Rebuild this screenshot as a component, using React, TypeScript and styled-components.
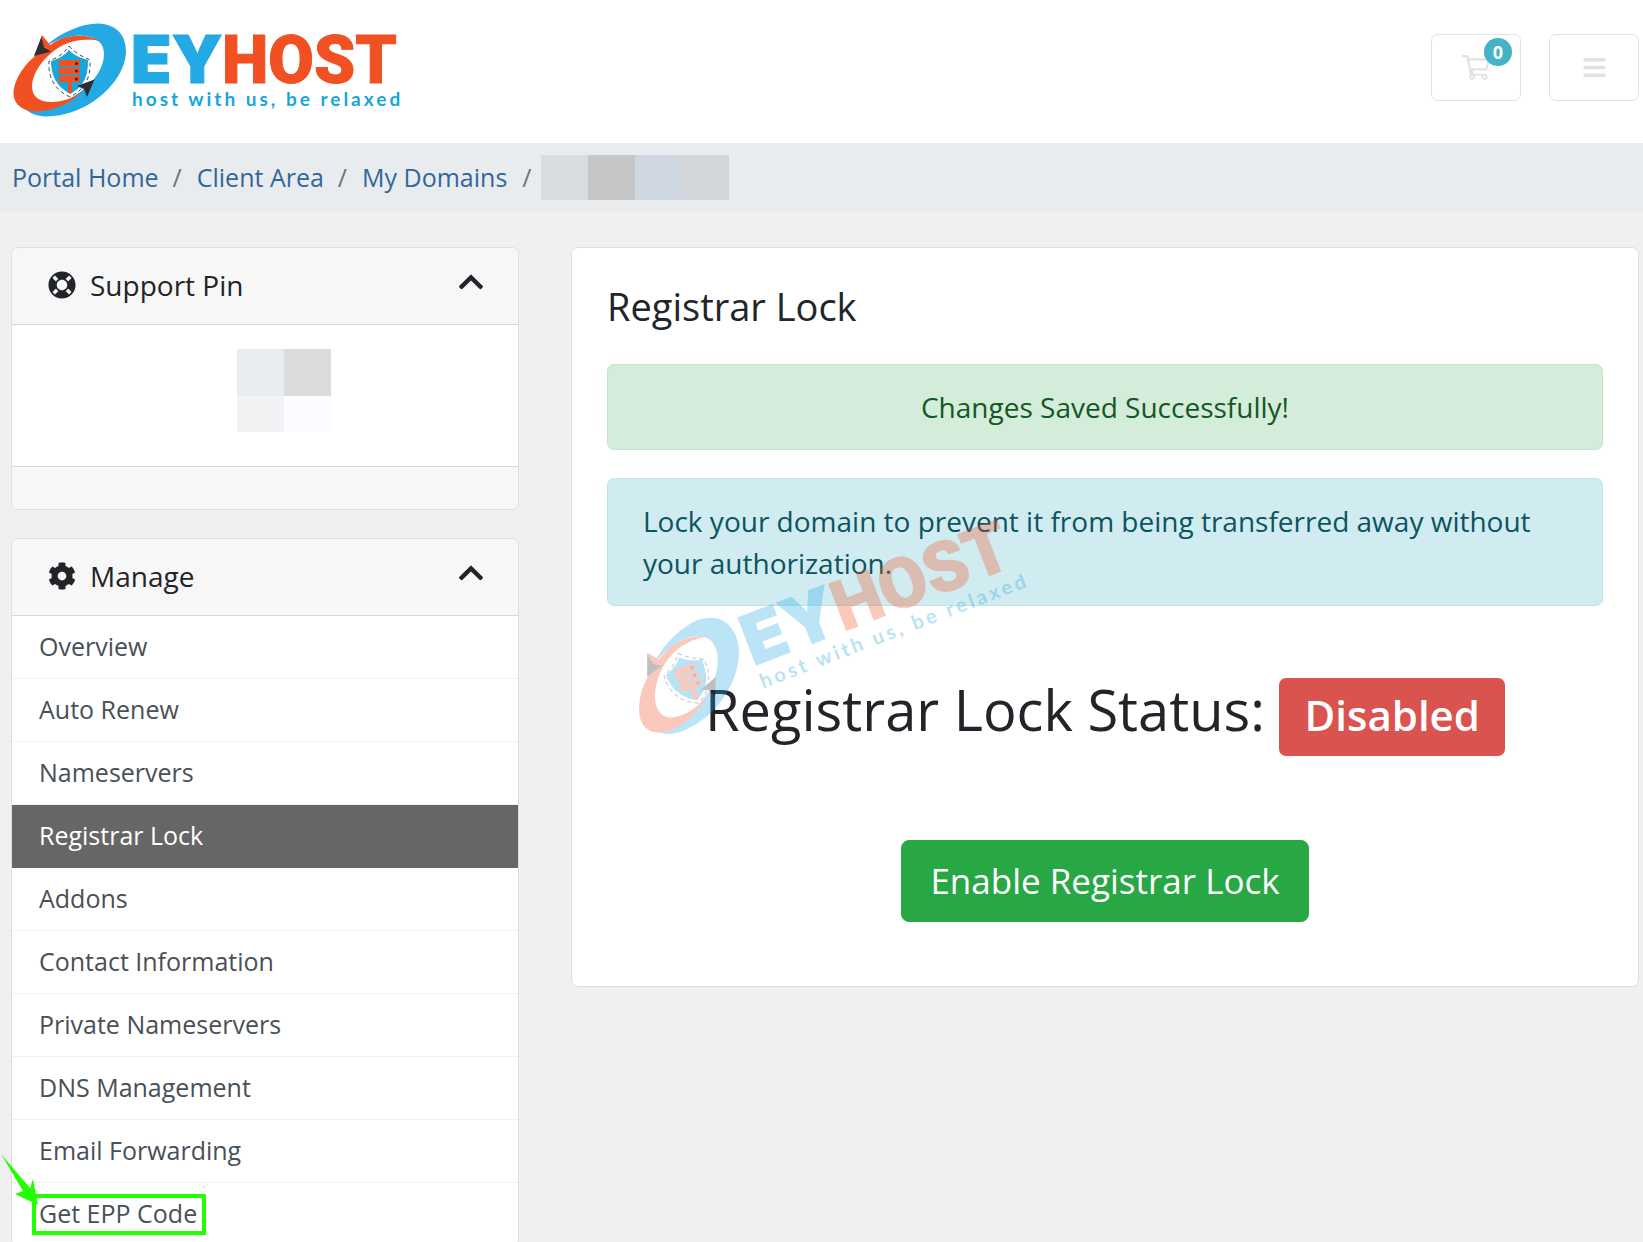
import React from "react";
import styled, { createGlobalStyle, css } from "styled-components";
import { FaBars, FaChevronUp, FaCog, FaLifeRing } from "react-icons/fa";

const GlobalStyle = createGlobalStyle`
  *, *::before, *::after { box-sizing: border-box; }
  body {
    margin: 0;
    background: #f0f0f0;
    color: #212529;
    font-family: "Open Sans", "Noto Sans", sans-serif;
    font-size: 28px;
    line-height: 42px;
  }
  a { text-decoration: none; }
`;

const Page = styled.div`
  height: 100vh;
  overflow: hidden;
`;

const Header = styled.header`
  display: flex;
  align-items: center;
  justify-content: space-between;
  padding: 12px 4px 11px 0;
  background: #fff;
`;

const LogoSvg = styled.svg`
  display: block;
  width: 420px;
  height: 120px;
`;

const HeaderTools = styled.div`
  display: flex;
  gap: 28px;
  margin-bottom: 10px;
`;

const ToolButton = styled.button`
  position: relative;
  display: flex;
  align-items: center;
  justify-content: center;
  width: 90px;
  height: 67px;
  padding: 0;
  border: 1px solid #e2e2e2;
  border-radius: 7px;
  background: #fff;
  color: #e2e2e2;
`;

const CountBadge = styled.span`
  position: absolute;
  top: 3px;
  right: 8px;
  width: 28px;
  height: 28px;
  border-radius: 50%;
  background: #45b3c6;
  color: #fff;
  font: 700 18px/28px "Open Sans", sans-serif;
  text-align: center;
`;

const Breadcrumb = styled.nav`
  background: #e9ecef;

  ol {
    display: flex;
    align-items: center;
    height: 69px;
    margin: 0;
    padding: 0 12px 1px;
    list-style: none;
    font-size: 25px;
  }
  li {
    display: flex;
    align-items: center;
  }
  li + li::before {
    content: "/";
    padding: 0 15px 0 14px;
    color: #6c757d;
  }
  li:last-child::before {
    padding-left: 15px;
    padding-right: 10px;
  }
  a {
    color: #336699;
  }
`;

const Mosaic = styled.span<{ $columns: number; $rows: string }>`
  display: grid;
  grid-template-columns: repeat(${(p) => p.$columns}, 47px);
  grid-template-rows: ${(p) => p.$rows};
`;

const Tile = styled.span<{ $color: string }>`
  background: ${(p) => p.$color};
`;

const Layout = styled.div`
  display: grid;
  grid-template-columns: minmax(0, 508fr) minmax(0, 1068fr);
  align-items: start;
  column-gap: 52px;
  padding: 35px 4px 0 11px;
`;

const Sidebar = styled.aside`
  display: grid;
  gap: 28px;
`;

const Card = styled.section`
  border: 1px solid #dfdfdf;
  border-radius: 7px;
  background: #fff;
`;

const CardHeader = styled.h3`
  display: flex;
  align-items: center;
  gap: 14px;
  height: 77px;
  margin: 0;
  padding: 0 33px 2px 36px;
  border-bottom: 1px solid #d8d8d8;
  border-radius: 6px 6px 0 0;
  background: #f7f7f7;
  font-size: 28px;
  font-weight: 400;
`;

const Collapse = styled.button`
  display: flex;
  margin-left: auto;
  margin-bottom: 6px;
  padding: 0;
  border: 0;
  background: none;
  color: inherit;
`;

const PinBody = styled.div`
  display: flex;
  justify-content: center;
  padding: 24px 35px 34px 72px;
`;

const CardFooter = styled.div`
  height: 43px;
  border-top: 1px solid #d8d8d8;
  border-radius: 0 0 6px 6px;
  background: #f7f7f7;
`;

const MenuLink = styled.a<{ $active?: boolean }>`
  display: block;
  height: 63px;
  padding: 9px 27px;
  border-bottom: 1px solid #f2f2f2;
  color: #495057;
  font-size: 25px;
  ${(p) =>
    p.$active &&
    css`
      border-color: #666;
      background: #666;
      color: #fff;
    `}
`;

const Marked = styled.span`
  position: relative;

  &::after {
    content: "";
    position: absolute;
    inset: -2px -9px -5px -7px;
    border: 4px solid #22ff00;
    border-radius: 1px;
  }
`;

const Arrow = styled.svg`
  position: absolute;
  left: -40px;
  top: -44px;
  width: 40px;
  height: 54px;
`;

const Panel = styled(Card)`
  position: relative;
  padding: 35px 35px 64px;
`;

const Title = styled.h3`
  margin: 0 0 35px;
  font-size: 38px;
  font-weight: 400;
  line-height: 46px;
`;

const Alert = styled.div<{ $kind: "success" | "info" }>`
  margin-bottom: 28px;
  padding: 21px 35px;
  border: 1px solid;
  border-radius: 7px;
  ${(p) =>
    p.$kind === "success"
      ? css`
          border-color: #c3e6cb;
          background: #d4edda;
          color: #155724;
          text-align: center;
        `
      : css`
          border-color: #bee5eb;
          background: #d1ecf1;
          color: #0c5460;
        `}
`;

const Status = styled.h2`
  margin: 63px 0 84px;
  font-size: 56px;
  font-weight: 400;
  line-height: 80px;
  text-align: center;
`;

const StatusLabel = styled.span`
  display: inline-block;
  padding: 16px 25px 20px;
  border-radius: 7px;
  background: #d9534f;
  color: #fff;
  font-size: 42px;
  font-weight: 600;
  line-height: 42px;
`;

const Actions = styled.form`
  display: flex;
  justify-content: center;
`;

const SubmitButton = styled.button`
  padding: 14px 28px;
  border: 1px solid #28a745;
  border-radius: 8px;
  background: #28a745;
  color: #fff;
  font: 400 35px/52px "Open Sans", sans-serif;
`;

const Watermark = styled.div`
  position: absolute;
  left: 33px;
  top: 314px;
  opacity: 0.3;
  pointer-events: none;
  transform: rotate(-21deg);

  svg {
    width: 444px;
    height: 127px;
  }
`;

function Logo({ label }: { label?: string }) {
  return (
    <LogoSvg viewBox="0 12 420 120" role="img" aria-label={label}>
      <path
        fill="#23a9e3"
        d="M44 47C61 32 82 23.5 98 23.5C117 24 126 36 126 51C126 80 90 116 46 116.5C36 116 29 113 24 108C55 115 104 85 104 54C104 43 97 38 86 36C74 34 60 38 44 47Z"
      />
      <path
        fill="#f15022"
        d="M100 41C86 33 65 34 50 45L42 35L34 57C20 69 14 83 13.5 92C13 104 22 111 36 111.500C55 111 71 103 83 91C74 98 62 102 52 102C38 102 32 96 32 86C33 66 57 41 82 40C90 39.500 95 40 100 41Z"
      />
      <path
        fill="none"
        stroke="#35506a"
        strokeWidth="1"
        strokeDasharray="4 3"
        d="M69 46C75 53 83 57 90 60C91 76 86 89 70 97C53 89 48 76 49 61C57 58 64 54 69 46Z"
      />
      <path fill="#17a6dc" d="M69 50C74 56 82 58 88 60C88 75 85 86 70 94C56 86 51 75 51 61C58 59 64 56 69 50Z" />
      <path fill="#f15022" d="M59 60H80V66.500H59ZM59 68H80V74H59ZM59 75.500H80V82H59ZM68 82H72V93H68Z" />
      <g fill="#2b2f33">
        <circle cx="76.500" cy="63.500" r="1.600" />
        <circle cx="76.500" cy="71" r="1.600" />
        <circle cx="76.500" cy="79" r="1.600" />
        <path d="M41.500 37L44 47.500L51 51.500L34 56Z" />
        <path d="M94.500 79.500L87 97L84 89L77 86Z" />
      </g>
      <g fontSize="66" strokeWidth="1">
        <text x="131" y="83" fill="#23a9e3" stroke="#23a9e3" fontFamily="Inter, sans-serif" fontWeight="900">
          EY
        </text>
        <text x="222" y="83" fill="#f15022" stroke="#f15022" fontFamily="Roboto, sans-serif" fontWeight="900">
          HOST
        </text>
      </g>
      <text x="132" y="106" fill="#17a6dc" fontFamily="Lato, sans-serif" fontWeight="700" fontSize="19" letterSpacing="3">
        host with us, be relaxed
      </text>
    </LogoSvg>
  );
}

function CartIcon() {
  return (
    <svg width="28" height="25" viewBox="0 0 576 512" fill="currentColor" aria-hidden="true">
      <path d="M551.991 64H144.28l-8.726-44.608C133.35 8.128 123.478 0 112 0H12C5.373 0 0 5.373 0 12v24c0 6.627 5.373 12 12 12h80.240l69.594 355.701C150.796 415.201 144 430.802 144 448c0 35.346 28.654 64 64 64s64-28.654 64-64a63.681 63.681 0 0 0-8.583-32h145.167a63.681 63.681 0 0 0-8.583 32c0 35.346 28.654 64 64 64 35.346 0 64-28.654 64-64 0-17.993-7.435-34.240-19.388-45.868C506.022 391.891 496.760 384 485.328 384H233.520L221 320h278.400c11.200 0 20.900-7.800 23.400-18.700l47-208C574.300 82.200 567.400 64 552 64zM208 472c-13.234 0-24-10.766-24-24s10.766-24 24-24 24 10.766 24 24-10.766 24-24 24zm256 0c-13.234 0-24-10.766-24-24s10.766-24 24-24 24 10.766 24 24-10.766 24-24 24zm23.438-200H184.980l-31.310-160h368.548l-34.780 160z" />
    </svg>
  );
}

function SideHeader({ icon, title }: { icon: React.ReactNode; title: string }) {
  return (
    <CardHeader>
      {icon}
      {title}
      <Collapse type="button" aria-label={`Collapse ${title}`}>
        <FaChevronUp size={28} />
      </Collapse>
    </CardHeader>
  );
}

const menu = [
  "Overview",
  "Auto Renew",
  "Nameservers",
  "Registrar Lock",
  "Addons",
  "Contact Information",
  "Private Nameservers",
  "DNS Management",
  "Email Forwarding",
];

export default function App() {
  return (
    <Page>
      <GlobalStyle />
      <Header>
        <Logo label="EYHOST" />
        <HeaderTools>
          <ToolButton type="button" aria-label="Shopping cart">
            <CartIcon />
            <CountBadge>0</CountBadge>
          </ToolButton>
          <ToolButton type="button" aria-label="Menu">
            <FaBars size={25} />
          </ToolButton>
        </HeaderTools>
      </Header>
      <Breadcrumb aria-label="Breadcrumb">
        <ol>
          <li><a href="#home">Portal Home</a></li>
          <li><a href="#client">Client Area</a></li>
          <li><a href="#domains">My Domains</a></li>
          <li>
            <Mosaic $columns={4} $rows="45px">
              <Tile $color="#d7dce0" />
              <Tile $color="#c6c6c7" />
              <Tile $color="#cfd7e1" />
              <Tile $color="#d2d6d9" />
            </Mosaic>
          </li>
        </ol>
      </Breadcrumb>
      <Layout>
        <Sidebar>
          <Card>
            <SideHeader icon={<FaLifeRing size={28} />} title="Support Pin" />
            <PinBody>
              <Mosaic $columns={2} $rows="47px 36px">
                <Tile $color="#e9edf0" />
                <Tile $color="#dcdcdc" />
                <Tile $color="#f2f2f4" />
                <Tile $color="#fbfcff" />
              </Mosaic>
            </PinBody>
            <CardFooter />
          </Card>
          <Card>
            <SideHeader icon={<FaCog size={28} />} title="Manage" />
            <nav aria-label="Manage">
              {menu.map((name) => (
                <MenuLink key={name} href="#manage" $active={name === "Registrar Lock"}>
                  {name}
                </MenuLink>
              ))}
              <MenuLink href="#epp">
                <Marked>
                  Get EPP Code
                  <Arrow viewBox="0 0 40 54" aria-hidden="true">
                    <path fill="#22ff00" d="M2 2L31 36L34 27L39 53L16 42L24 39Z" />
                  </Arrow>
                </Marked>
              </MenuLink>
            </nav>
          </Card>
        </Sidebar>
        <Panel as="main">
          <Title>Registrar Lock</Title>
          <Alert $kind="success">Changes Saved Successfully!</Alert>
          <Alert $kind="info">
            Lock your domain to prevent it from being transferred away without your authorization.
          </Alert>
          <Status>
            Registrar Lock Status: <StatusLabel>Disabled</StatusLabel>
          </Status>
          <Actions onSubmit={(e) => e.preventDefault()}>
            <SubmitButton type="submit">Enable Registrar Lock</SubmitButton>
          </Actions>
          <Watermark aria-hidden="true">
            <Logo />
          </Watermark>
        </Panel>
      </Layout>
    </Page>
  );
}
